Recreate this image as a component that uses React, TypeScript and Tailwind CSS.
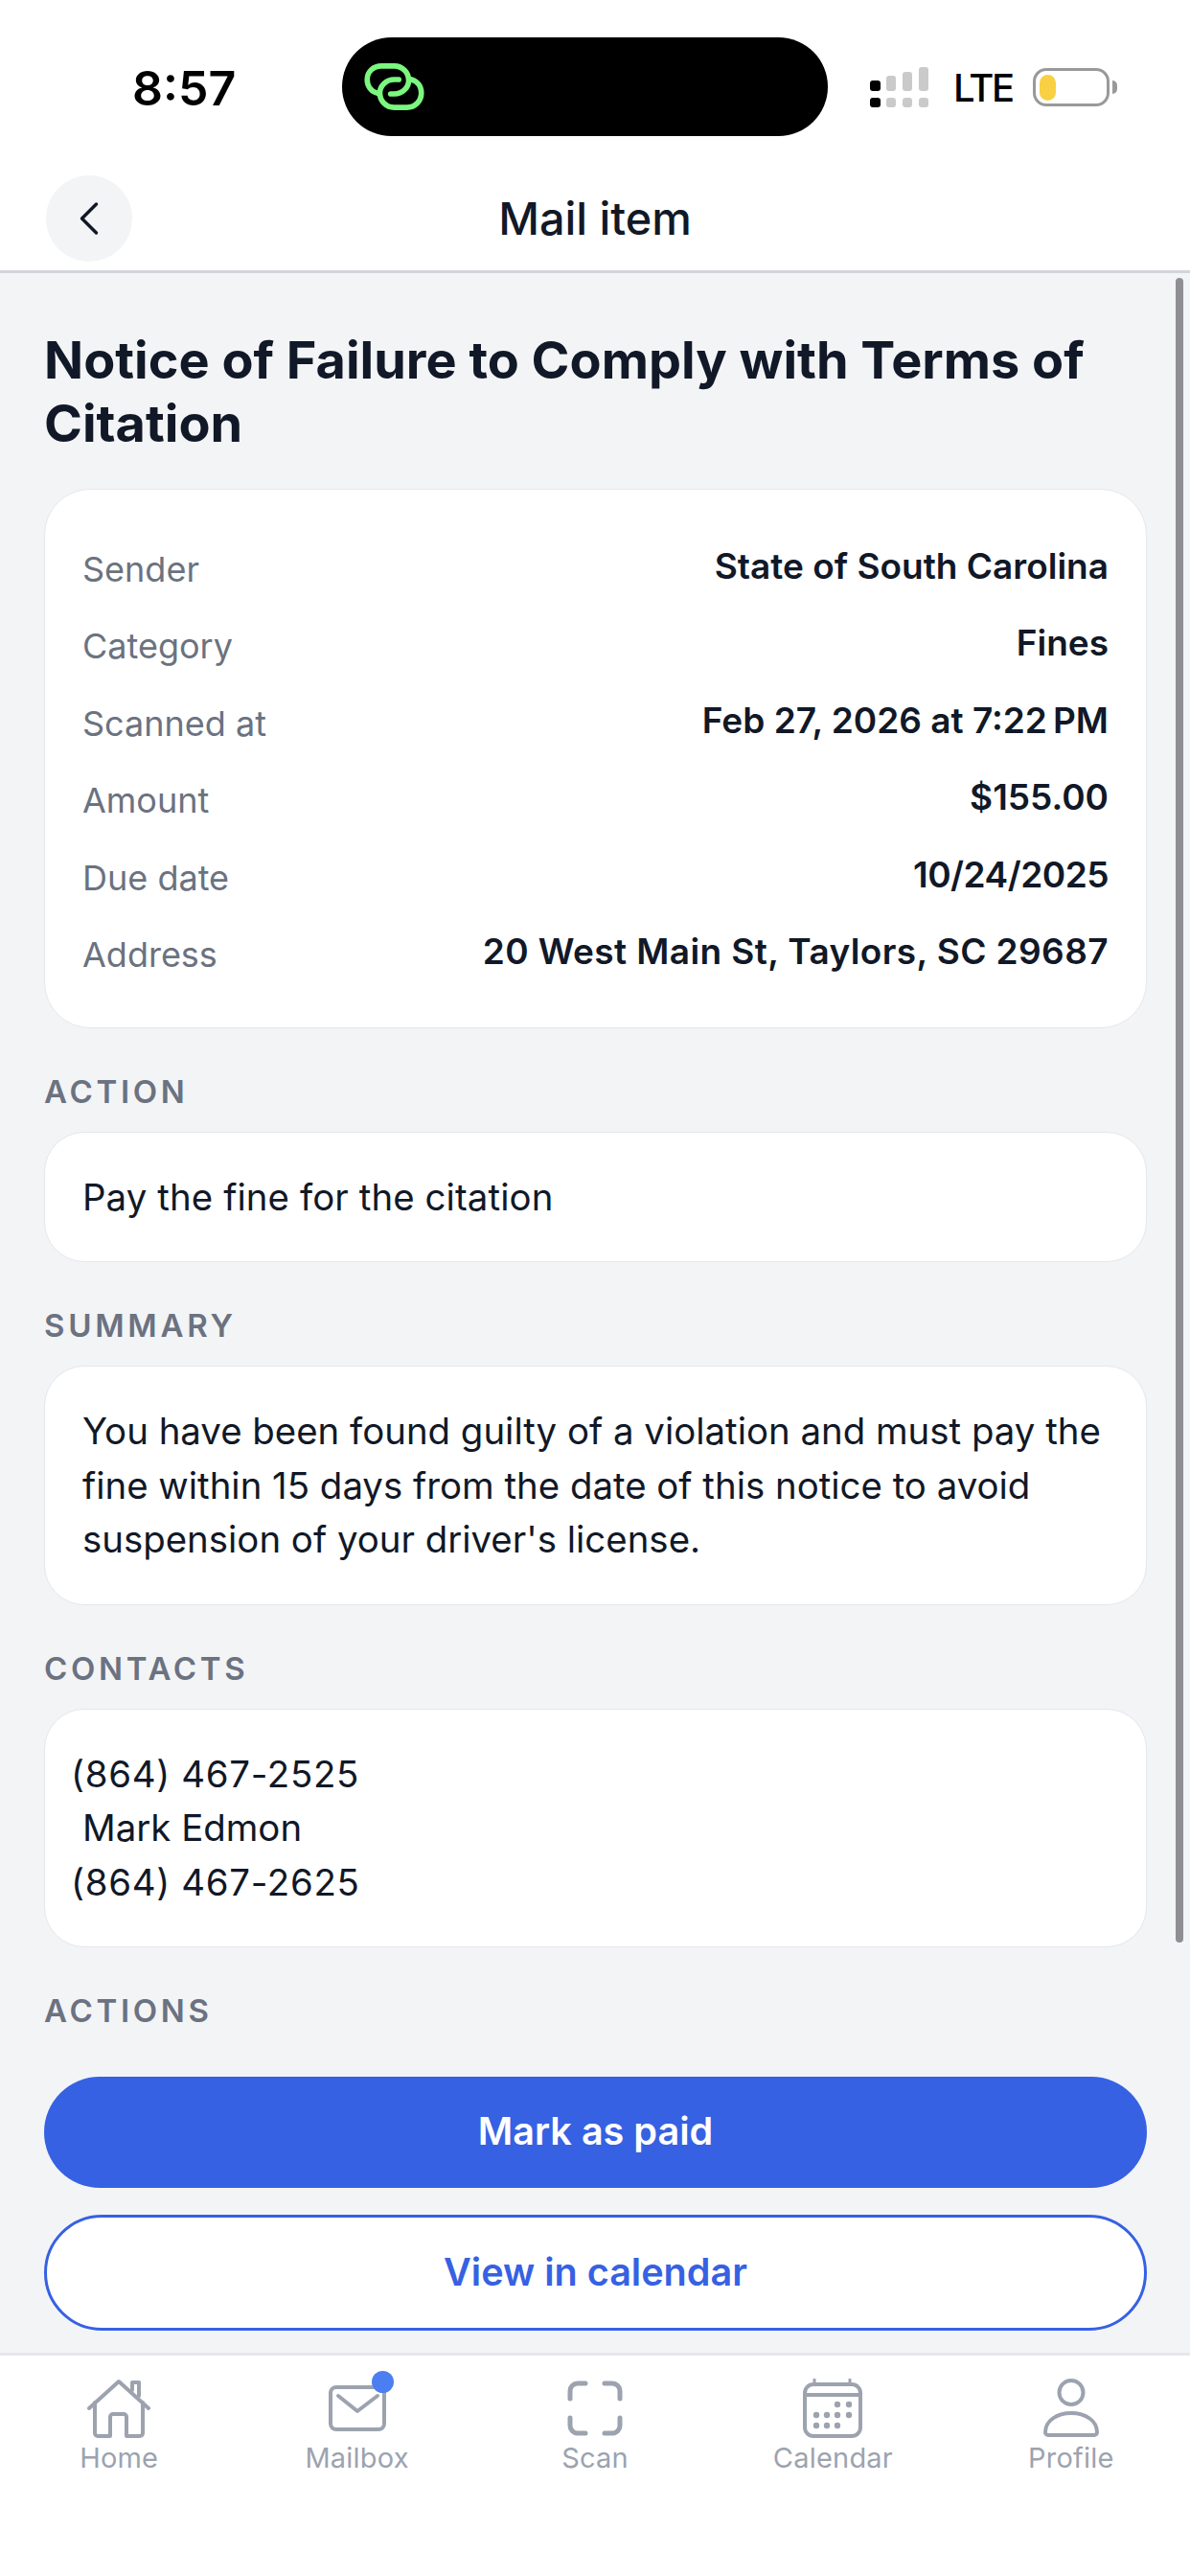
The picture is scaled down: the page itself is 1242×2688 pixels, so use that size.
import { ChevronLeft } from 'lucide-react';

const font = { fontFamily: 'Inter, sans-serif' };

const details = [
  { label: 'Sender', value: 'State of South Carolina', cls: '' },
  { label: 'Category', value: 'Fines', cls: '' },
  { label: 'Scanned at', value: 'Feb 27, 2026 at 7:22\u202fPM', cls: '' },
  { label: 'Amount', value: '$155.00', cls: '' },
  { label: 'Due date', value: '10/24/2025', cls: 'tracking-[-0.5px]' },
  { label: 'Address', value: '20 West Main St, Taylors, SC 29687', cls: 'tracking-[0.4px]' },
];

function SectionLabel({ children }: { children: string }) {
  return <h2 className="mt-[46px] mb-[22px] text-[33px] leading-[40px] font-semibold tracking-[3.7px] text-[#6b7280]">{children}</h2>;
}

function HomeIcon() {
  return (
    <svg width="66" height="62" viewBox="0 0 66 62" fill="none" stroke="#9ca3af" strokeWidth="4" strokeLinecap="round" strokeLinejoin="round">
      <path d="M2 31 33 3 64 31" />
      <path d="M8 25V57a3 3 0 0 0 3 3H24V40a3 3 0 0 1 3-3H38a3 3 0 0 1 3 3V60H55a3 3 0 0 0 3-3V25" />
      <path d="M47 12V4H54V18" />
    </svg>
  );
}

function MailIcon() {
  return (
    <svg width="60" height="48" viewBox="0 0 60 48" fill="none" stroke="#9ca3af" strokeWidth="4" strokeLinecap="round" strokeLinejoin="round">
      <rect x="2" y="2" width="56" height="44" rx="6" />
      <path d="M10 11 30 27 51 11" />
    </svg>
  );
}

function ScanIcon() {
  return (
    <svg width="58" height="58" viewBox="0 0 58 58" fill="none" stroke="#9ca3af" strokeWidth="5" strokeLinecap="round" strokeLinejoin="round">
      <path d="M3 19V11a8 8 0 0 1 8-8H19" />
      <path d="M39 3H47a8 8 0 0 1 8 8V19" />
      <path d="M55 39V47a8 8 0 0 1-8 8H39" />
      <path d="M19 55H11a8 8 0 0 1-8-8V39" />
    </svg>
  );
}

function CalendarIcon() {
  const dots = [
    [36, 27], [48, 27],
    [14, 38], [25, 38], [36, 38], [48, 38],
    [14, 49], [25, 49], [36, 49],
  ];
  return (
    <svg width="62" height="62" viewBox="0 0 62 62" fill="none" stroke="#9ca3af" strokeWidth="4" strokeLinecap="round">
      <rect x="2" y="6" width="58" height="54" rx="9" />
      <path d="M2 17H60" />
      <path d="M12 1V5M49 1V5" strokeWidth="3" />
      {dots.map(([x, y]) => (
        <circle key={`${x}-${y}`} cx={x} cy={y} r="3.2" fill="#9ca3af" stroke="none" />
      ))}
    </svg>
  );
}

function ProfileIcon() {
  return (
    <svg width="58" height="62" viewBox="0 0 58 62" fill="none" stroke="#9ca3af" strokeWidth="4" strokeLinecap="round" strokeLinejoin="round">
      <circle cx="29" cy="14.5" r="12.5" />
      <path d="M2 56C2 44 14 36 29 36S56 44 56 56a3 3 0 0 1-3 3H5a3 3 0 0 1-3-3Z" />
    </svg>
  );
}

function StatusBar() {
  return (
    <div className="flex h-[165px] items-start bg-white">
      <div className="mt-[62px] ml-[138px] w-[219px] text-[50px] leading-[60px] font-semibold text-black">8:57</div>
      <div className="mt-[39px] flex h-[103px] w-[507px] items-center rounded-full bg-black pl-[23px]">
        <svg width="63" height="49" viewBox="0 0 66 52" fill="none" stroke="#7bf77f" strokeWidth="6" strokeLinecap="round">
          <path d="M14 33C7 31 3 25 3 18 3 9 10 3 19 3H33C42 3 49 10 49 19 49 27 42 34 33 34H29" />
          <path d="M52 18C59 20 63 26 63 33 63 42 56 49 47 49H33C24 49 17 42 17 33 17 25 24 18 33 18H38" />
        </svg>
      </div>
      <div className="mt-[69px] ml-[44px] flex items-center">
        <svg width="62" height="42" viewBox="0 0 62 42" fill="#cacaca">
          <rect x="0" y="14" width="11" height="11" rx="3" fill="#000" />
          <rect x="0" y="32" width="11" height="10" rx="3" fill="#000" />
          <rect x="17" y="9" width="10" height="16" rx="3" />
          <rect x="17" y="32" width="10" height="10" rx="3" />
          <rect x="34" y="5" width="10" height="20" rx="3" />
          <rect x="34" y="32" width="10" height="10" rx="3" />
          <rect x="51" y="0" width="10" height="25" rx="3" />
          <rect x="51" y="32" width="10" height="10" rx="3" />
        </svg>
        <span className="ml-[25px] w-[58px] pt-[2px] text-[40px] leading-[42px] font-medium tracking-[-2.5px] text-black">LTE</span>
        <div className="ml-[25px] flex h-[40px] w-[80px] items-center rounded-[14px] border-[3px] border-[#999] pl-[4px]">
          <div className="h-[27px] w-[17px] rounded-full bg-[#f9d044]" />
        </div>
        <div className="ml-[3px] h-[14px] w-[5px] rounded-r-full bg-[#999]" />
      </div>
    </div>
  );
}

export default function App() {
  return (
    <div className="relative flex h-[2688px] w-[1242px] flex-col overflow-hidden bg-[#f3f4f6]" style={font}>
      <StatusBar />

      <header className="flex h-[120px] items-start border-b-[3px] border-[#d1d5db] bg-white">
        <button className="ml-[48px] mt-[18px] flex h-[90px] w-[90px] shrink-0 items-center justify-center rounded-full bg-[#f3f4f6] text-[#111827]">
          <ChevronLeft size={60} strokeWidth={1.4} />
        </button>
        <h1 className="ml-[-138px] mt-[33px] w-full text-center text-[46.8px] leading-[60px] font-medium text-[#111827]">Mail item</h1>
      </header>

      <main className="flex-1 overflow-hidden pl-[46px] pr-[45px] pt-[58px]">
        <h2 className="text-[54px] leading-[66px] font-bold text-[#111827]">Notice of Failure to Comply with Terms of Citation</h2>

        <section className="mt-[35px] rounded-[48px] border-[1.5px] border-[#e5e7eb] bg-white px-[39px] py-[39px]">
          {details.map((row) => (
            <div key={row.label} className="flex h-[80.5px] items-center justify-between">
              <span className="pt-[7px] text-[36px] text-[#6b7280]">{row.label}</span>
              <span className={`text-[37px] font-semibold text-[#111827] ${row.cls}`}>{row.value}</span>
            </div>
          ))}
        </section>

        <SectionLabel>ACTION</SectionLabel>
        <section className="rounded-[42px] border-[1.5px] border-[#e5e7eb] bg-white px-[39px] py-[39px] text-[38.4px] leading-[56px] tracking-[0.1px] text-[#111827]">
          Pay the fine for the citation
        </section>

        <SectionLabel>SUMMARY</SectionLabel>
        <section className="rounded-[42px] border-[1.5px] border-[#e5e7eb] bg-white px-[39px] py-[39px] text-[38.4px] leading-[56.5px] text-[#111827]">
          You have been found guilty of a violation and must pay the fine within 15 days from the date of this notice to avoid suspension of your driver's license.
        </section>

        <SectionLabel>CONTACTS</SectionLabel>
        <section className="rounded-[42px] border-[1.5px] border-[#e5e7eb] bg-white px-[27px] py-[39px] text-[38.4px] leading-[56.5px] text-[#111827]">
          <div className="tracking-[0.7px]">(864) 467-2525</div>
          <div className="pl-[12px]">Mark Edmon</div>
          <div className="tracking-[0.7px]">(864) 467-2625</div>
        </section>

        <SectionLabel>ACTIONS</SectionLabel>
        <button className="mt-[27px] h-[116px] w-full rounded-full bg-[#3661e3] text-[39.6px] font-semibold text-white">Mark as paid</button>
        <button className="mt-[28px] h-[121px] w-full rounded-full border-[3px] border-[#3661e3] bg-white text-[39.6px] font-semibold text-[#3661e3]">View in calendar</button>
      </main>

      <div className="absolute left-[1227px] top-[290px] h-[1737px] w-[8px] rounded-full bg-[#8e8e93]" />

      <nav className="grid h-[233px] grid-cols-5 border-t-[3px] border-[#e5e7eb] bg-white pt-[24px]">
        {[
          { label: 'Home', icon: <HomeIcon /> },
          { label: 'Mailbox', icon: <MailIcon /> },
          { label: 'Scan', icon: <ScanIcon /> },
          { label: 'Calendar', icon: <CalendarIcon /> },
          { label: 'Profile', icon: <ProfileIcon /> },
        ].map(({ label, icon }) => (
          <div key={label} className="flex flex-col items-center">
            <div className="relative flex h-[62px] items-center justify-center">
              {icon}
              {label === 'Mailbox' && <span className="absolute right-[-8px] top-[-8px] h-[23px] w-[23px] rounded-full bg-[#4b7ef0]" />}
            </div>
            <span className="mt-[3px] text-[29px] leading-[36px] tracking-[0.2px] text-[#9ca3af]">{label}</span>
          </div>
        ))}
      </nav>
    </div>
  );
}
